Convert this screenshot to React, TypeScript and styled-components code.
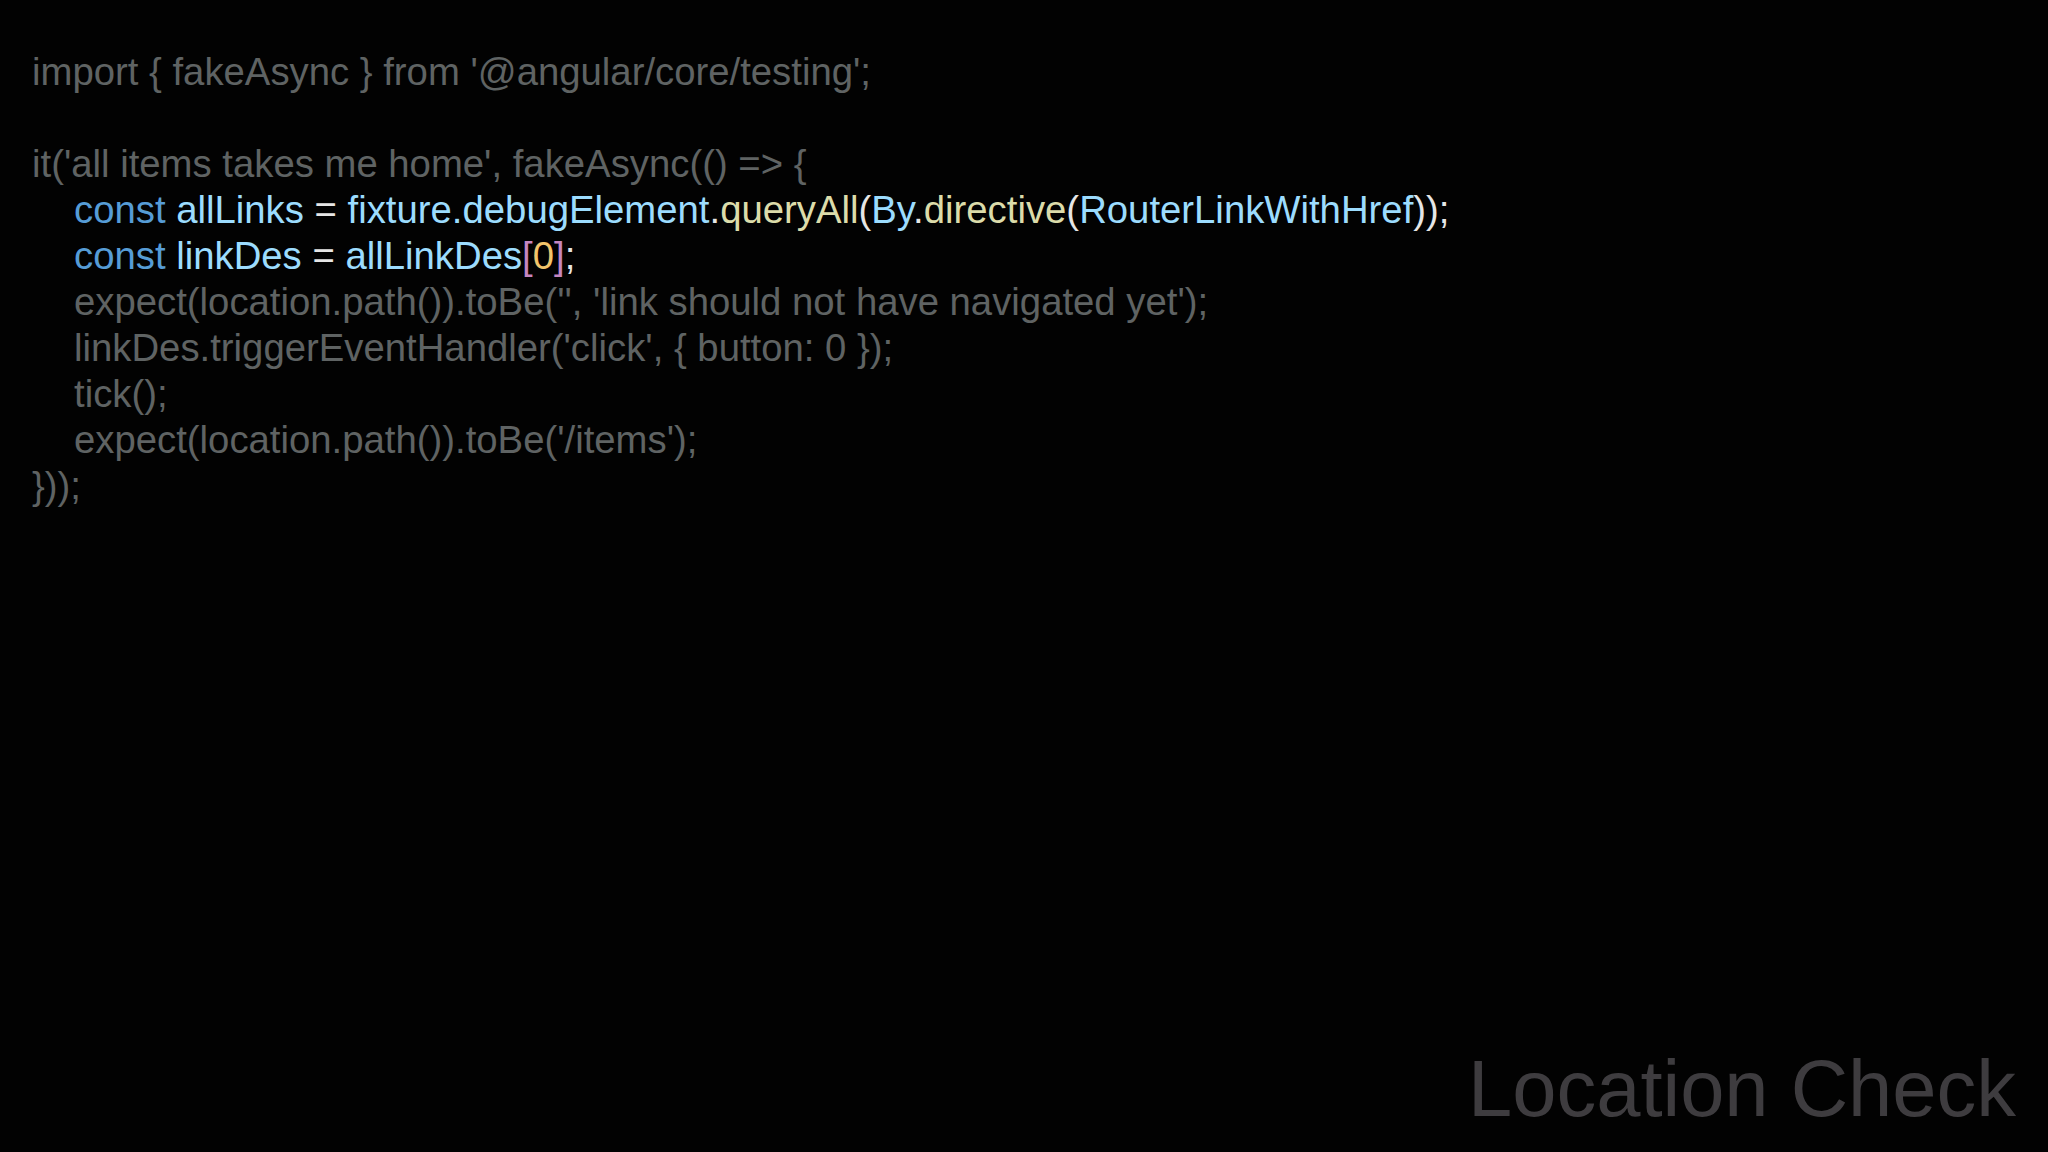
import React from "react";
import styled, { createGlobalStyle } from "styled-components";

type Kind = "dim" | "keyword" | "variable" | "func" | "plain" | "bracket" | "number";

const colors: Record<Kind, string> = {
  dim: "#5f6363",
  keyword: "#569cd6",
  variable: "#9cdcfe",
  func: "#dcdcaa",
  plain: "#e6e6e6",
  bracket: "#c586c0",
  number: "#f2c46b",
};

const GlobalStyle = createGlobalStyle`
  html, body {
    margin: 0;
    padding: 0;
    background: #020202;
  }
  #root {
    min-height: 100vh;
  }
`;

const Slide = styled.main`
  width: 2048px;
  height: 1152px;
  box-sizing: border-box;
  display: flex;
  flex-direction: column;
  padding: 49px 32px 24px 32px;
  background: #020202;
  overflow: hidden;
`;

const Code = styled.pre`
  margin: 0;
  font-family: "Liberation Sans", Arial, sans-serif;
  font-size: 38.3px;
  line-height: 46px;
  white-space: pre;
  color: ${colors.dim};
`;

const Line = styled.div<{ $indent?: boolean }>`
  height: 46px;
  padding-left: ${(p) => (p.$indent ? "42px" : "0")};
`;

const Token = styled.span<{ $kind: Kind }>`
  color: ${(p) => colors[p.$kind]};
`;

const Title = styled.h1`
  margin: auto 0 0;
  align-self: flex-end;
  font-family: "Liberation Sans", Arial, sans-serif;
  font-weight: 400;
  font-size: 79.5px;
  line-height: 1;
  color: #3e3c3f;
`;

type Part = [Kind, string];

const lines: { indent?: boolean; parts: Part[] }[] = [
  { parts: [["dim", "import { fakeAsync } from '@angular/core/testing';"]] },
  { parts: [] },
  { parts: [["dim", "it('all items takes me home', fakeAsync(() => {"]] },
  {
    indent: true,
    parts: [
      ["keyword", "const "],
      ["variable", "allLinks "],
      ["plain", "= "],
      ["variable", "fixture.debugElement"],
      ["plain", "."],
      ["func", "queryAll"],
      ["plain", "("],
      ["variable", "By"],
      ["plain", "."],
      ["func", "directive"],
      ["plain", "("],
      ["variable", "RouterLinkWithHref"],
      ["plain", "));"],
    ],
  },
  {
    indent: true,
    parts: [
      ["keyword", "const "],
      ["variable", "linkDes "],
      ["plain", "= "],
      ["variable", "allLinkDes"],
      ["bracket", "["],
      ["number", "0"],
      ["bracket", "]"],
      ["plain", ";"],
    ],
  },
  { indent: true, parts: [["dim", "expect(location.path()).toBe('', 'link should not have navigated yet');"]] },
  { indent: true, parts: [["dim", "linkDes.triggerEventHandler('click', { button: 0 });"]] },
  { indent: true, parts: [["dim", "tick();"]] },
  { indent: true, parts: [["dim", "expect(location.path()).toBe('/items');"]] },
  { parts: [["dim", "}));"]] },
];

export default function App() {
  return (
    <>
      <GlobalStyle />
      <Slide>
        <Code>
          {lines.map((line, i) => (
            <Line key={i} $indent={line.indent}>
              {line.parts.map(([kind, text], j) => (
                <Token key={j} $kind={kind}>
                  {text}
                </Token>
              ))}
            </Line>
          ))}
        </Code>
        <Title>Location Check</Title>
      </Slide>
    </>
  );
}
